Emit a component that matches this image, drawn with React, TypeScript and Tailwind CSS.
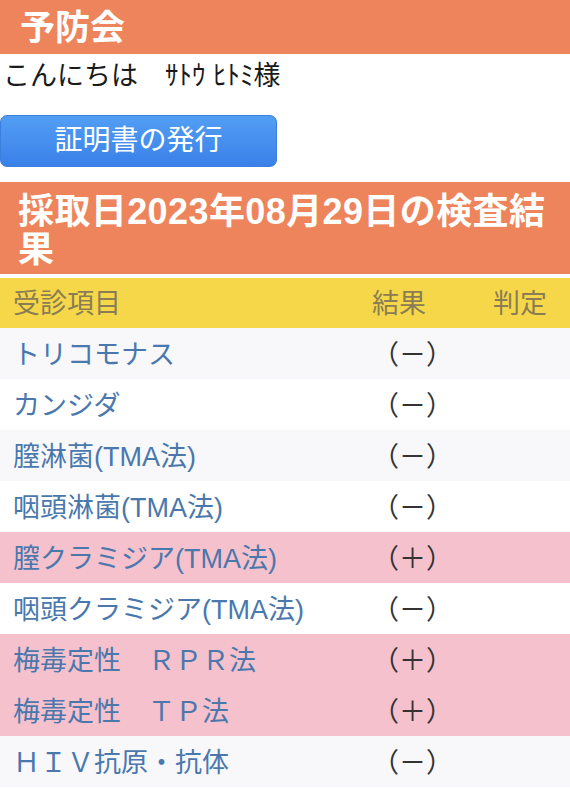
import React from 'react'

const font = { fontFamily: '"Liberation Sans", "Noto Sans CJK JP", sans-serif' }

type Row = { name: string; result: string; positive?: boolean }

const rows: Row[] = [
  { name: 'トリコモナス', result: '（－）' },
  { name: 'カンジダ', result: '（－）' },
  { name: '膣淋菌(TMA法)', result: '（－）' },
  { name: '咽頭淋菌(TMA法)', result: '（－）' },
  { name: '膣クラミジア(TMA法)', result: '（＋）', positive: true },
  { name: '咽頭クラミジア(TMA法)', result: '（－）' },
  { name: '梅毒定性　ＲＰＲ法', result: '（＋）', positive: true },
  { name: '梅毒定性　ＴＰ法', result: '（＋）', positive: true },
  { name: 'ＨＩＶ抗原・抗体', result: '（－）' },
]

const App = () => {
  return (
    <div className="w-[570px] min-h-[799px] bg-white font-['Liberation_Sans','Noto_Sans_CJK_JP',sans-serif]" style={font}>
      <div className="h-[54px] bg-[#ee845b] flex items-center pl-[20px]">
        <h1 className="text-[35px] font-bold text-white leading-none">予防会</h1>
      </div>

      <p className="text-[27px] leading-[40px] text-[#1a1a1a] pl-[3px] pt-[2px]">こんにちは　ｻﾄｳ ﾋﾄﾐ様</p>

      <button className="mt-[19px] w-[277px] h-[52px] rounded-[7px] border border-[#3b7fdc] bg-gradient-to-b from-[#539ef4] to-[#3a80e9] text-white text-[28px] leading-none">
        証明書の発行
      </button>

      <h2 className="mt-[15px] bg-[#ee845b] text-white text-[36px] font-bold tracking-[0.4px] leading-[38px] px-[18px] pt-[11px] pb-[5px]">
        採取日2023年08月29日の検査結果
      </h2>

      <div className="mt-[4px]">
        <div className="h-[50px] bg-[#f7d74a] grid grid-cols-[359px_121px_1fr] items-center pl-[13px] pt-[2px] text-[27px] text-[#8a7d54]">
          <span>受診項目</span>
          <span>結果</span>
          <span>判定</span>
        </div>
        {rows.map((r, i) => (
          <div
            key={r.name}
            className={
              'h-[51px] grid grid-cols-[359px_121px_1fr] items-center pl-[13px] pt-[3px] text-[27px] ' +
              (r.positive ? 'bg-[#f5c1cc]' : i % 2 === 0 ? 'bg-[#f8f8fb]' : 'bg-white')
            }
          >
            <span className="text-[#4a78ad] whitespace-nowrap">{r.name}</span>
            <span className="text-[#333]">{r.result}</span>
            <span></span>
          </div>
        ))}
      </div>
    </div>
  )
}

export default App
